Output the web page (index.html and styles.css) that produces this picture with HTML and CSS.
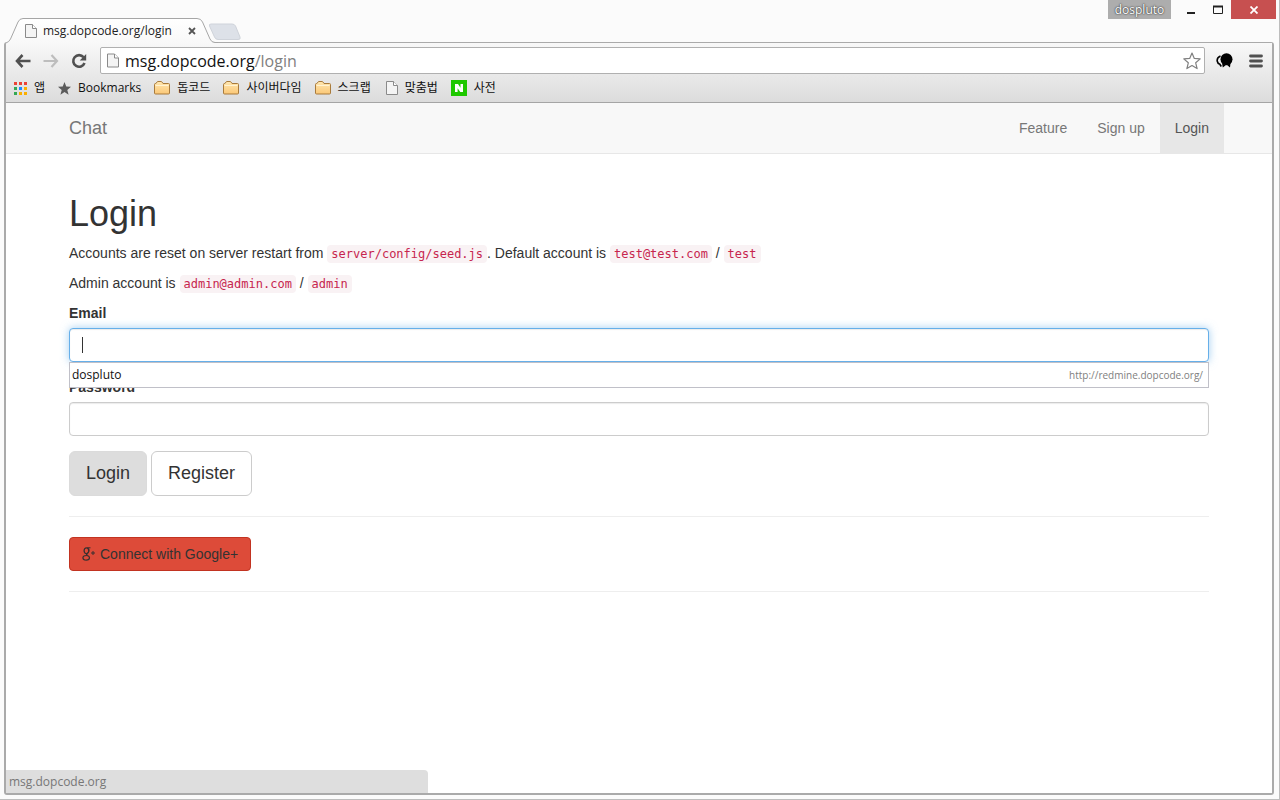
FILE: index.html
```html
<!DOCTYPE html>
<html lang="ko">
<head>
<meta charset="utf-8">
<title>msg.dopcode.org/login</title>
<link rel="stylesheet" href="styles.css">
</head>
<body>
<svg class="defs" width="0" height="0" aria-hidden="true">
  <defs>
    <linearGradient id="folder-fill" x1="0" y1="0" x2="0" y2="1"><stop offset="0" stop-color="#ffe7b0"/><stop offset="1" stop-color="#fbc877"/></linearGradient>
    <linearGradient id="tab-fill" x1="0" y1="0" x2="0" y2="1"><stop offset="0" stop-color="#fff"/><stop offset="1" stop-color="#f8f8f8"/></linearGradient>
    <symbol id="file" viewBox="0 0 12 14"><path d="M.5.5h7l4 4v9H.5z" fill="#f4f4f4" stroke="#8a8a8a"/><path d="M7.500.5v4h4" fill="#fff" stroke="#8a8a8a"/></symbol>
    <symbol id="folder" viewBox="0 0 16 14"><path d="M.5 12V3.500q0-1 1-1H2l1-1.500q.3-.5 1-.5h3q.7 0 1 .5l1 1.500h5.500q1 0 1 1V12q0 1-1 1h-13q-1 0-1-1z" fill="url(#folder-fill)" stroke="#a97b3c"/><path d="M1.500 4.500h13" stroke="#fff3d2"/></symbol>
  </defs>
</svg>

<header class="titlebar">
  <div class="tabs">
    <div class="tab">
      <svg class="tab-shape" width="212" height="26" viewBox="0 0 212 26" aria-hidden="true"><path d="M0 24.500Q3 24 4.500 21L12 4Q13.500.5 17 .5H191Q195 .5 196.500 4L204 21Q205.500 24.500 209 24.500H212V26H0z" fill="url(#tab-fill)"/><path d="M0 25Q3 24 4.500 21L12 4Q13.500.5 17 .5H191Q195 .5 196.500 4L204 21Q205.500 24.500 209 24.500H212" fill="none" stroke="#a6a6a6"/></svg>
      <svg class="tab-icon" width="12" height="14"><use href="#file"/></svg>
      <span class="tab-title">msg.dopcode.org/login</span>
      <button class="tab-close" type="button" aria-label="Close tab"><svg width="8" height="8" viewBox="0 0 8 8"><path d="M1 1l6 6M7 1l-6 6" stroke="#555" stroke-width="1.800"/></svg></button>
    </div>
    <button class="new-tab" type="button" aria-label="New tab"><svg width="33" height="18" viewBox="0 0 33 18"><path d="M3 1H24Q26.500 1 27.500 3L32 14Q33 16.500 30 16.500H10Q7.500 16.500 6.500 14L1.500 3Q.8 1 3 1z" fill="#dde1e8" stroke="#cfd3da"/></svg></button>
  </div>
  <div class="window-buttons">
    <button class="user" type="button">dospluto</button>
    <button class="min" type="button" aria-label="Minimize"><svg width="10" height="9" viewBox="0 0 10 9"><path d="M1 8h8" stroke="#222" stroke-width="2"/></svg></button>
    <button class="max" type="button" aria-label="Maximize"><svg width="10" height="9" viewBox="0 0 10 9"><path d="M.5 1V8.500H9.500V1" fill="none" stroke="#222"/><path d="M0 1.500h10" stroke="#222" stroke-width="2"/></svg></button>
    <button class="close" type="button" aria-label="Close"><svg width="8" height="8" viewBox="0 0 8 8"><path d="M.5.5l7 7M7.500.5l-7 7" stroke="#fff" stroke-width="1.800"/></svg></button>
  </div>
</header>

<div class="frame">
  <div class="toolbar">
    <div class="nav-row">
      <button class="tool" type="button" aria-label="Back"><svg width="16" height="14" viewBox="0 0 16 14"><path d="M7.500 1L2 7l5.500 6M2 7h13.500" fill="none" stroke="#505050" stroke-width="2.600"/></svg></button>
      <button class="tool" type="button" aria-label="Forward"><svg width="16" height="14" viewBox="0 0 16 14"><path d="M8.500 1L14 7l-5.500 6M14 7H.5" fill="none" stroke="#bdbdbd" stroke-width="2.200"/></svg></button>
      <button class="tool" type="button" aria-label="Reload"><svg width="16" height="16" viewBox="0 0 16 16"><path d="M12.500 4.200A5.800 5.800 0 1 0 13.500 10" fill="none" stroke="#505050" stroke-width="2.600"/><path d="M15.200 1v6.500H8.700z" fill="#505050"/></svg></button>
      <div class="omnibox">
        <svg width="12" height="15"><use href="#file"/></svg>
        <a class="url" href="#">msg.dopcode.org<span>/login</span></a>
        <button class="star" type="button" aria-label="Bookmark this page"><svg width="18" height="18" viewBox="0 0 18 18"><path d="M9 1l2.300 5.400 5.900.5-4.500 3.900 1.400 5.800L9 13.500l-5.100 3.100 1.400-5.800L.8 6.900l5.900-.5z" fill="#fff" stroke="#808080" stroke-width="1.200" stroke-linejoin="round"/></svg></button>
      </div>
      <button class="tool" type="button" aria-label="Extension"><svg width="17" height="15" viewBox="0 0 17 15"><circle cx="10.500" cy="6.200" r="6" fill="#000"/><path d="M6 10l.8 4.500L10 12zM11 12l3 2.500.5-4.500z" fill="#000"/><path d="M4.500 3Q.8 4.500 1.200 8q.4 2.500 2.600 3.200l1.500 2.300" fill="none" stroke="#000" stroke-width="1.600"/></svg></button>
      <button class="tool menu" type="button" aria-label="Menu"><svg width="14" height="14" viewBox="0 0 14 14"><path d="M1.500 2h11M1.500 7h11M1.500 12h11" stroke="#505050" stroke-width="2.800" stroke-linecap="round"/></svg></button>
    </div>
    <nav class="bookmarks" aria-label="Bookmarks">
      <a href="#"><svg width="13" height="13" viewBox="0 0 13 13"><path d="M0 0h3v3H0zM5 0h3v3H5zM10 0h3v3h-3z" fill="#ea4335"/><path d="M0 5h3v3H0zM0 10h3v3H0z" fill="#34a853"/><path d="M5 5h3v3H5z" fill="#1a8cff"/><path d="M10 5h3v3h-3zM5 10h3v3H5zM10 10h3v3h-3z" fill="#fbaf00"/></svg>앱</a>
      <a href="#"><svg width="13" height="13" viewBox="0 0 14 14"><path d="M7 0l1.900 4.900 5.100.3-4 3.300 1.400 5.200L7 10.800l-4.400 2.900L4 8.500 0 5.200l5.100-.3z" fill="#5b5b5b"/></svg>Bookmarks</a>
      <a href="#"><svg width="16" height="14"><use href="#folder"/></svg>돕코드</a>
      <a href="#"><svg width="16" height="14"><use href="#folder"/></svg>사이버다임</a>
      <a href="#"><svg width="16" height="14"><use href="#folder"/></svg>스크랩</a>
      <a class="page-link" href="#"><svg width="12" height="14"><use href="#file"/></svg>맞춤법</a>
      <a href="#"><svg width="16" height="16" viewBox="0 0 16 16"><path d="M0 0h16v16H0z" fill="#1ec800"/><path d="M4 12V4h3l2.500 3.700V4H12v8H9.300L6.600 8.200V12z" fill="#fff"/></svg>사전</a>
    </nav>
  </div>

  <main class="page">
    <nav class="navbar">
      <div class="container navbar-inner">
        <a class="brand" href="#">Chat</a>
        <div class="nav-links">
          <a href="#">Feature</a>
          <a href="#">Sign up</a>
          <a class="active" href="#">Login</a>
        </div>
      </div>
    </nav>
    <div class="container content">
      <h1>Login</h1>
      <p>Accounts are reset on server restart from <code>server/config/seed.js</code>. Default account is <code>test@test.com</code> / <code>test</code></p>
      <p>Admin account is <code>admin@admin.com</code> / <code>admin</code></p>
      <form>
        <div class="form-group">
          <label for="email">Email</label>
          <div class="field">
            <input class="focused" id="email" type="email" autocomplete="off">
            <div class="suggestions"><span>dospluto</span><span class="source">http://redmine.dopcode.org/</span></div>
          </div>
        </div>
        <div class="form-group">
          <label for="password">Password</label>
          <input id="password" type="password">
        </div>
        <div class="actions">
          <button class="btn btn-lg btn-login" type="submit">Login</button>
          <a class="btn btn-lg" href="#">Register</a>
        </div>
        <hr>
        <a class="btn btn-google" href="#"><svg width="14" height="14" viewBox="0 0 14 14" aria-hidden="true"><g fill="none" stroke="#3a3030"><path d="M8.500.8H5.200" stroke-width="1"/><ellipse cx="4.400" cy="3.700" rx="2.300" ry="2.900" stroke-width="1.300"/><path d="M5.200 6.500c-1.200.8-.6 1.400.4 2" stroke-width="1.300"/><ellipse cx="4.200" cy="10.800" rx="3.300" ry="2.300" stroke-width="1.200"/><path d="M6.300.9c1.200 1.500 1 3.800-.5 5" stroke-width=".8"/><path d="M11 4v4M9 6h4" stroke-width="1"/></g></svg>Connect with Google+</a>
        <hr>
      </form>
    </div>
    <div class="status">msg.dopcode.org</div>
  </main>
</div>
</body>
</html>
```
FILE: styles.css
```css
* {
  box-sizing: border-box;
}

body {
  display: flex;
  flex-direction: column;
  min-height: 100vh;
  margin: 0;
  background: #fbfbfb;
  border-right: 1px solid #bdbdbd;
  border-bottom: 1px solid #bdbdbd;
  color: #333;
  font: 14px/20px "Liberation Sans", Arial, sans-serif;
}

button {
  padding: 0;
  border: 0;
  background: none;
  color: inherit;
  font: inherit;
}

a {
  color: inherit;
  text-decoration: none;
}

svg {
  flex: none;
}

.defs {
  position: absolute;
}

/* Window chrome */
.titlebar,
.toolbar,
.suggestions,
.status {
  font-family: "Open Sans", "Noto Sans CJK KR", sans-serif;
  font-size: 12px;
}

.titlebar {
  display: flex;
  justify-content: space-between;
  height: 42px;
}

.tabs {
  display: flex;
  align-items: flex-end;
  padding-left: 6px;
}

.tab {
  position: relative;
  z-index: 1;
  display: flex;
  align-items: center;
  width: 202px;
  height: 24px;
  padding: 2px 11px 0 19px;
  color: #222;
}

.tab-shape {
  position: absolute;
  top: 0;
  left: 0;
}

.tab-icon,
.tab-title,
.tab-close {
  position: relative;
}

.tab-title {
  flex: 1;
  margin-left: 6px;
  white-space: nowrap;
}

.tab-close,
.new-tab,
.tool,
.star {
  display: flex;
  align-items: center;
  justify-content: center;
}

.tab-close {
  width: 10px;
}

.new-tab {
  height: 21px;
}

.window-buttons {
  display: flex;
  align-items: flex-start;
  padding-right: 3px;
}

.window-buttons button {
  display: flex;
  align-items: center;
  justify-content: center;
  width: 27px;
  height: 19px;
}

.window-buttons .user {
  width: 63px;
  margin-right: 6px;
  background: #adadad;
  color: #fff;
  text-shadow: 0 0 2px #333, 0 0 1px #333;
}

.window-buttons .close {
  width: 45px;
  background: #c75050;
}

.frame {
  display: flex;
  flex: 1;
  flex-direction: column;
  margin: 0 5px 4px 4px;
  border: solid #aaa;
  border-width: 1px 2px 2px;
  border-radius: 3px;
}

.toolbar {
  padding-top: 4px;
  border-bottom: 1px solid #a5a5a5;
  background: linear-gradient(#f8f8f8, #dcdcdc);
}

.nav-row {
  display: flex;
  align-items: center;
  padding: 0 7px 0 8px;
  gap: 10px;
}

.tool {
  width: 18px;
  height: 26px;
}

.menu {
  margin-left: 4px;
}

.omnibox {
  display: flex;
  flex: 1;
  align-items: center;
  height: 27px;
  margin-left: 2px;
  padding: 0 3px 0 6px;
  border: 1px solid #b0b0b0;
  border-radius: 2px;
  background: #fff;
}

.url {
  flex: 1;
  margin-left: 6px;
  color: #111;
  font-size: 16px;
}

.url span {
  color: #808080;
}

.bookmarks {
  display: flex;
  align-items: center;
  height: 28px;
  padding-left: 8px;
  gap: 13px;
  color: #111;
}

.bookmarks a {
  display: flex;
  align-items: center;
  gap: 7px;
}

.bookmarks .page-link {
  padding-left: 2px;
}

/* Page */
.page {
  position: relative;
  flex: 1;
  background: #fff;
}

.container {
  width: 100%;
  max-width: 1170px;
  margin: 0 auto;
  padding: 0 15px;
}

.navbar {
  border-bottom: 1px solid #e7e7e7;
  background: #f8f8f8;
  color: #777;
}

.navbar-inner {
  display: flex;
  justify-content: space-between;
  padding-right: 0;
}

.brand {
  padding: 15px 0;
  font-size: 18px;
}

.nav-links {
  display: flex;
}

.nav-links a {
  padding: 15px;
}

.nav-links .active {
  background: #e7e7e7;
  color: #555;
}

.content {
  padding-top: 40px;
}

h1 {
  margin: 0 0 10px;
  font-size: 36px;
  font-weight: 400;
  line-height: 39px;
}

p {
  margin: 0 0 10px;
}

code {
  padding: 2px 4px;
  border-radius: 4px;
  background: #f9f2f4;
  color: #c7254e;
  font: 12px "DejaVu Sans Mono", monospace;
}

.form-group {
  margin-bottom: 15px;
}

label {
  display: block;
  margin-bottom: 5px;
  font-weight: 700;
}

input {
  display: block;
  width: 100%;
  height: 34px;
  padding: 6px 12px;
  border: 1px solid #ccc;
  border-radius: 4px;
  outline: 0;
  background: #fff;
  box-shadow: inset 0 1px 1px rgba(0, 0, 0, .08);
  font: inherit;
}

.focused {
  border-color: #66afe9;
  background: #fff linear-gradient(#333, #333) 12px 8px / 1px 16px no-repeat;
  box-shadow: inset 0 1px 1px rgba(0, 0, 0, .08), 0 0 8px rgba(102, 175, 233, .6);
  caret-color: transparent;
}

.field {
  position: relative;
}

.suggestions {
  position: absolute;
  top: 100%;
  right: 0;
  left: 0;
  display: flex;
  align-items: center;
  justify-content: space-between;
  height: 26px;
  padding: 0 5px 0 2px;
  border: 1px solid #c0c0c8;
  background: #fff;
  color: #111;
}

.source {
  color: #808080;
  font-size: 10px;
}

.actions {
  display: flex;
  gap: 4px;
}

.btn {
  display: inline-flex;
  align-items: center;
  padding: 6px 12px;
  gap: 4px;
  border: 1px solid #ccc;
  border-radius: 4px;
  background: #fff;
  color: #333;
}

.btn-lg {
  padding: 10px 16px;
  border-radius: 6px;
  font-size: 18px;
  line-height: 23px;
}

.btn-login {
  border-color: #dbdbdb;
  background: #ddd;
}

.btn-google {
  border-color: #c23321;
  background: #dd4b39;
}

hr {
  margin: 20px 0;
  border: 0;
  border-top: 1px solid #eee;
}

.status {
  position: absolute;
  bottom: 0;
  left: 0;
  width: 33.3%;
  padding: 2px 3px 1px;
  border-top-right-radius: 4px;
  background: #dedede;
  color: #777;
}
```
